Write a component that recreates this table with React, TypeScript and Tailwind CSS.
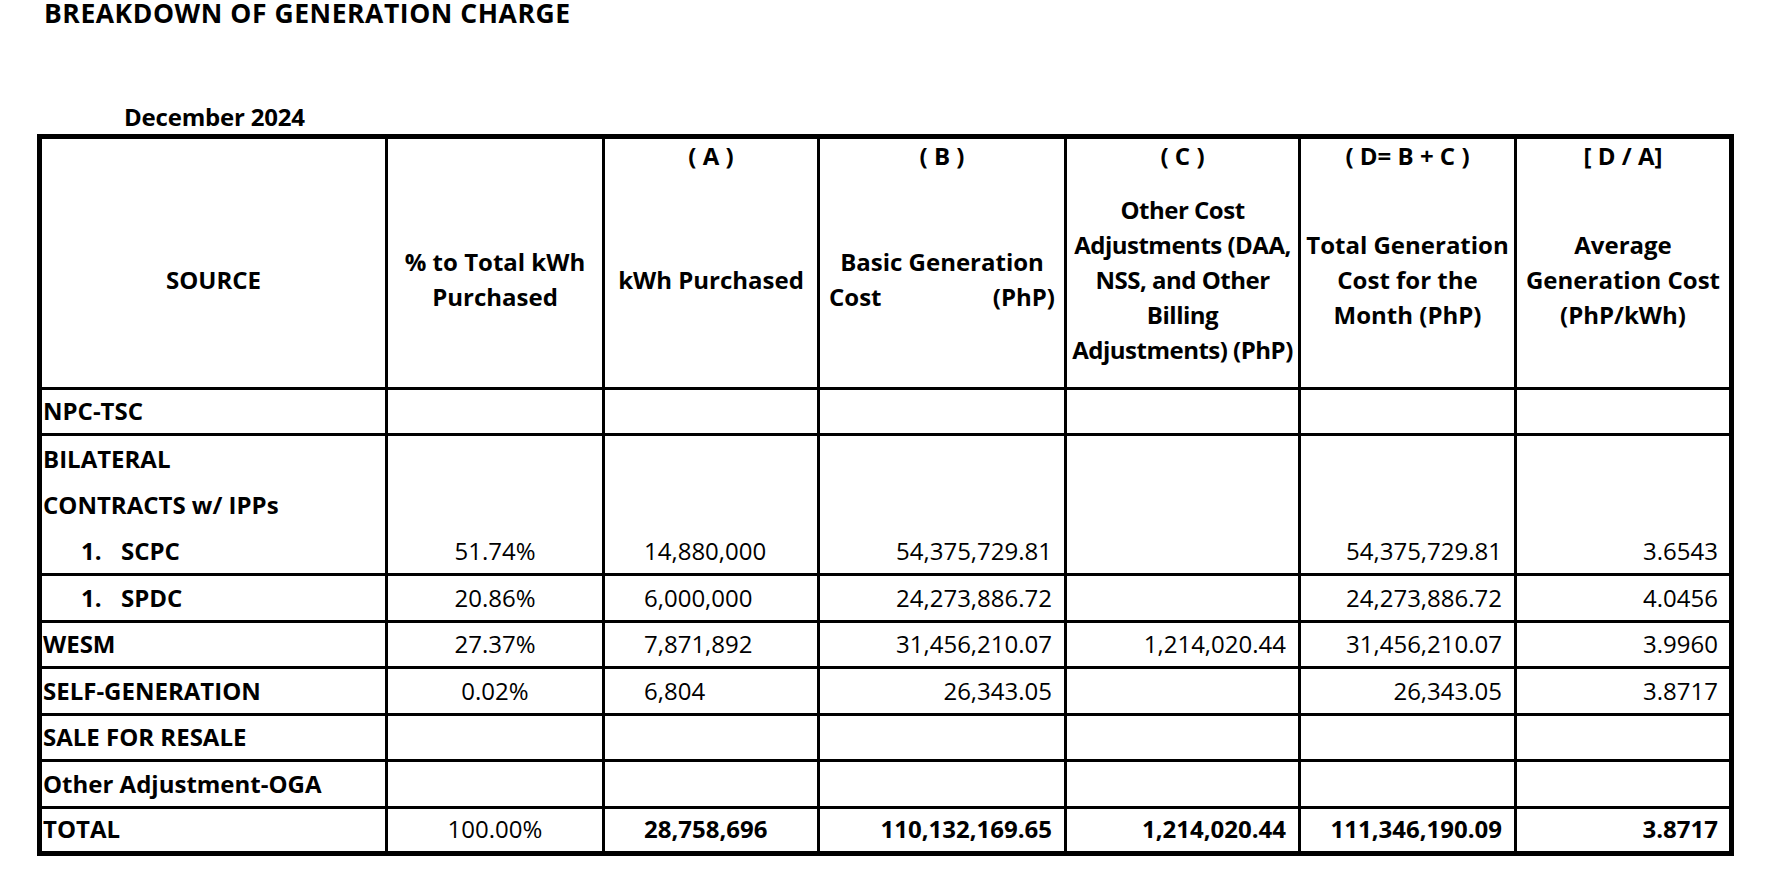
import React from "react";

const GRID = "grid grid-cols-[343px_217px_215px_247px_234px_216px_215px]";

const colCls = [
  "",
  "justify-center",
  "justify-start pl-[39px]",
  "justify-end pr-[12px]",
  "justify-end pr-[12px]",
  "justify-end pr-[12px]",
  "justify-end pr-[11px]",
];

type Vals = [string, string, string, string, string, string];

function ValueCells({ v, boldIdx = [] }: { v: Vals; boldIdx?: number[] }) {
  return (
    <>
      {v.map((t, i) => (
        <div
          key={i}
          className={`border-l-[3px] border-black flex items-end pb-[7px] whitespace-nowrap ${colCls[i + 1]} ${
            boldIdx.includes(i) ? "font-bold" : "font-normal"
          }`}
        >
          {t}
        </div>
      ))}
    </>
  );
}

function Row({
  h,
  label,
  v,
  boldIdx,
}: {
  h: string;
  label: React.ReactNode;
  v: Vals;
  boldIdx?: number[];
}) {
  return (
    <div className={`${GRID} ${h} border-t-[3px] border-black`}>
      <div className="flex items-end pb-[7px] pl-[1px] font-bold whitespace-nowrap">{label}</div>
      <ValueCells v={v} boldIdx={boldIdx} />
    </div>
  );
}

function Item({ name }: { name: string }) {
  return (
    <div className="flex">
      <span className="ml-[38px] w-[40px] inline-block">1.</span>
      <span>{name}</span>
    </div>
  );
}

function HeadCell({
  top,
  children,
  first = false,
}: {
  top?: string;
  children: React.ReactNode;
  first?: boolean;
}) {
  return (
    <div className={`flex flex-col ${first ? "" : "border-l-[3px] border-black"}`}>
      <div className="h-[36px] text-center whitespace-nowrap leading-[33px]">{top}</div>
      <div className="flex-1 flex flex-col justify-center items-center text-center leading-[35px] pb-[4px]">
        {children}
      </div>
    </div>
  );
}

const E: Vals = ["", "", "", "", "", ""];

export default function App() {
  return (
    <div className="min-h-[880px] w-full bg-white text-black font-['Open_Sans',sans-serif]">
      <h1 className="pl-[44px] text-[26.5px] leading-[27px] tracking-[0.55px] font-bold whitespace-nowrap">
        BREAKDOWN OF GENERATION CHARGE
      </h1>
      <div className="mt-[75px] pl-[124px] text-[24px] leading-[30px] tracking-[-0.2px] font-bold whitespace-nowrap">
        December 2024
      </div>
      <div className="mt-[2px] ml-[37px] w-[1697px] border-[5px] border-black text-[24px] leading-[30px]">
        {/* header */}
        <div className={`${GRID} h-[248px] font-bold`}>
          <HeadCell first>
            <div>SOURCE</div>
          </HeadCell>
          <HeadCell>
            <div className="whitespace-nowrap">% to Total kWh</div>
            <div>Purchased</div>
          </HeadCell>
          <HeadCell top="( A )">
            <div className="whitespace-nowrap">kWh Purchased</div>
          </HeadCell>
          <HeadCell top="( B )">
            <div className="whitespace-nowrap">Basic Generation</div>
            <div className="w-full flex justify-between px-[9px]">
              <span>Cost</span>
              <span>(PhP)</span>
            </div>
          </HeadCell>
          <HeadCell top="( C )">
            <div className="whitespace-nowrap tracking-[-0.5px]">Other Cost</div>
            <div className="whitespace-nowrap tracking-[-0.5px]">Adjustments (DAA,</div>
            <div className="whitespace-nowrap tracking-[-0.5px]">NSS, and Other</div>
            <div className="whitespace-nowrap tracking-[-0.5px]">Billing</div>
            <div className="whitespace-nowrap tracking-[-0.5px]">Adjustments) (PhP)</div>
          </HeadCell>
          <HeadCell top="( D= B + C )">
            <div className="whitespace-nowrap">Total Generation</div>
            <div className="whitespace-nowrap">Cost for the</div>
            <div className="whitespace-nowrap">Month (PhP)</div>
          </HeadCell>
          <HeadCell top="[ D / A]">
            <div className="whitespace-nowrap">Average</div>
            <div className="whitespace-nowrap">Generation Cost</div>
            <div className="whitespace-nowrap">(PhP/kWh)</div>
          </HeadCell>
        </div>

        <Row h="h-[46px]" label="NPC-TSC" v={E} />

        {/* bilateral */}
        <div className={`${GRID} h-[140px] border-t-[3px] border-black`}>
          <div className="flex flex-col justify-end gap-[16px] pb-[7px] pl-[1px] font-bold whitespace-nowrap">
            <div>BILATERAL</div>
            <div>CONTRACTS w/ IPPs</div>
            <Item name="SCPC" />
          </div>
          <ValueCells v={["51.74%", "14,880,000", "54,375,729.81", "", "54,375,729.81", "3.6543"]} />
        </div>

        <Row
          h="h-[47px]"
          label={<Item name="SPDC" />}
          v={["20.86%", "6,000,000", "24,273,886.72", "", "24,273,886.72", "4.0456"]}
        />
        <Row
          h="h-[46px]"
          label="WESM"
          v={["27.37%", "7,871,892", "31,456,210.07", "1,214,020.44", "31,456,210.07", "3.9960"]}
        />
        <Row
          h="h-[47px]"
          label="SELF-GENERATION"
          v={["0.02%", "6,804", "26,343.05", "", "26,343.05", "3.8717"]}
        />
        <Row h="h-[46px]" label="SALE FOR RESALE" v={E} />
        <Row h="h-[47px]" label="Other Adjustment-OGA" v={E} />
        <Row
          h="h-[45px]"
          label="TOTAL"
          v={["100.00%", "28,758,696", "110,132,169.65", "1,214,020.44", "111,346,190.09", "3.8717"]}
          boldIdx={[1, 2, 3, 4, 5]}
        />
      </div>
    </div>
  );
}
